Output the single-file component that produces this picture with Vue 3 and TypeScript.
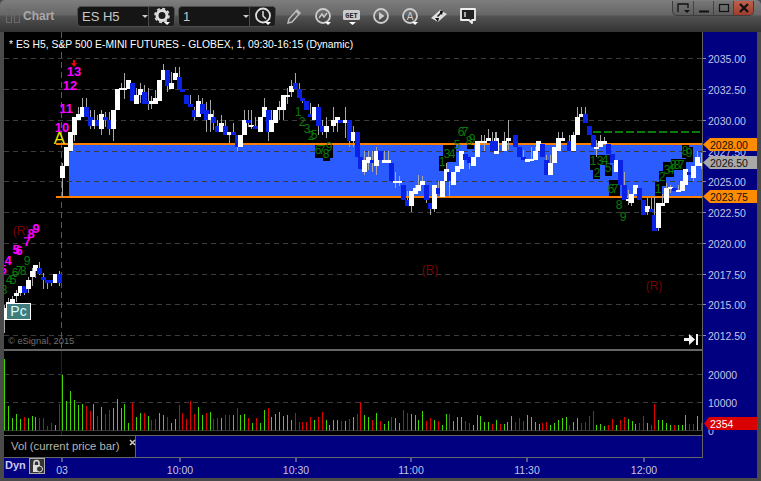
<script setup lang="ts">
type Raw = number[];
interface Body { x: number; y: number; h: number; wx: number; wt: number; wb: number; fill: string }

const seg = (ox: number, oy: number, rows: Raw[]): Body[] =>
  rows.map(([zx, t, b, wt, wb, c]) => {
    const cx = ox + zx / 3;
    const top = oy + t / 3;
    const bot = oy + b / 3;
    return {
      x: Math.round(cx - 2.5), y: Math.round(top), h: Math.max(2, Math.round(bot) - Math.round(top)),
      wx: Math.round(cx - 0.5), wt: Math.round(oy + wt / 3), wb: Math.round(oy + wb / 3),
      fill: c ? '#0a22e6' : '#ffffff',
    };
  });

const candles: Body[] = [
  ...seg(0, 215, [
    [14, 280, 315, 270, 354, 0], [24, 262, 300, 250, 300, 0], [36, 252, 265, 243, 265, 0], [48, 234, 243, 225, 260, 0],
    [60, 213, 234, 213, 243, 0], [72, 213, 234, 213, 240, 1], [85, 195, 222, 185, 234, 0], [97, 168, 186, 160, 213, 0],
    [107, 150, 168, 150, 190, 0], [119, 159, 177, 141, 180, 1], [130, 186, 195, 175, 222, 1], [142, 195, 204, 195, 222, 1],
    [154, 195, 204, 195, 213, 1], [165, 177, 204, 177, 204, 0], [178, 177, 204, 168, 213, 1],
  ]),
  ...seg(0, 60, [
    [187, 318, 354, 308, 410, 0], [199, 262, 318, 262, 318, 0], [211, 216, 272, 216, 272, 0], [223, 171, 225, 171, 243, 0],
    [235, 162, 180, 140, 180, 0], [247, 141, 171, 113, 171, 0], [259, 141, 171, 113, 171, 1], [271, 171, 198, 150, 207, 1],
    [282, 180, 198, 150, 207, 0], [291, 180, 198, 165, 198, 1], [304, 162, 207, 150, 225, 0], [316, 171, 180, 155, 200, 1],
    [327, 180, 207, 155, 225, 1], [340, 150, 207, 150, 243, 0], [352, 87, 150, 87, 150, 0], [364, 84, 90, 68, 90, 0],
    [373, 84, 90, 40, 117, 0], [385, 60, 87, 60, 87, 0], [397, 69, 123, 69, 123, 1], [409, 105, 132, 85, 132, 0],
    [421, 87, 105, 69, 130, 0], [433, 96, 132, 75, 132, 1], [445, 123, 132, 85, 150, 1], [455, 123, 132, 108, 147, 0],
    [466, 114, 132, 90, 132, 0], [478, 60, 123, 60, 123, 0], [490, 30, 60, 12, 60, 0], [502, 30, 78, 30, 96, 1],
    [514, 69, 87, 36, 87, 0], [526, 39, 60, 21, 60, 0], [538, 51, 87, 21, 87, 1], [548, 87, 96, 87, 96, 1],
    [560, 105, 132, 105, 132, 1], [571, 132, 141, 105, 141, 1], [583, 150, 171, 140, 180, 1], [595, 123, 171, 105, 171, 0],
    [607, 132, 162, 115, 162, 1], [619, 150, 180, 125, 216, 1], [630, 162, 180, 120, 216, 0], [640, 171, 189, 150, 210, 1],
    [651, 198, 216, 180, 216, 1], [663, 189, 216, 165, 216, 0], [676, 198, 225, 180, 225, 1], [688, 216, 225, 216, 250, 0],
    [700, 216, 225, 190, 225, 1], [712, 225, 261, 225, 273, 1], [722, 225, 261, 225, 261, 0], [734, 180, 225, 150, 225, 0],
    [745, 180, 189, 150, 200, 1],
  ]),
  ...seg(250, 70, [
    [5, 165, 170, 120, 177, 0], [17, 168, 177, 140, 177, 1], [31, 141, 186, 141, 186, 0], [43, 111, 141, 84, 141, 0],
    [55, 120, 186, 120, 213, 1], [64, 150, 186, 120, 186, 0], [76, 120, 159, 120, 159, 0], [88, 111, 120, 93, 150, 0],
    [100, 75, 120, 75, 150, 0], [112, 75, 80, 55, 102, 0], [124, 48, 66, 30, 80, 0], [136, 39, 57, 9, 57, 1],
    [148, 57, 84, 39, 84, 1], [157, 84, 93, 84, 100, 1], [169, 93, 120, 93, 120, 1], [180, 132, 141, 100, 141, 1],
    [192, 111, 150, 111, 150, 0], [204, 111, 168, 102, 195, 1], [216, 168, 186, 150, 195, 1], [230, 168, 186, 140, 205, 0],
    [250, 150, 168, 111, 186, 0], [262, 141, 159, 141, 186, 0], [272, 150, 159, 150, 159, 1], [285, 150, 159, 111, 204, 0],
    [297, 150, 213, 150, 230, 1], [309, 186, 213, 168, 232, 0], [321, 186, 261, 186, 261, 1], [330, 261, 297, 261, 297, 1],
    [343, 270, 306, 243, 315, 0], [355, 261, 279, 243, 300, 0], [366, 270, 279, 243, 306, 1], [378, 243, 288, 231, 315, 0],
    [390, 243, 270, 243, 270, 1], [402, 270, 279, 243, 279, 0], [414, 270, 279, 243, 279, 0], [424, 279, 333, 279, 333, 1],
    [436, 333, 339, 306, 354, 0], [448, 333, 339, 318, 348, 0], [460, 345, 390, 345, 390, 1], [471, 390, 408, 363, 408, 1],
    [484, 363, 408, 363, 426, 0], [496, 354, 372, 345, 372, 0], [505, 345, 363, 315, 363, 0], [517, 333, 345, 318, 345, 0],
    [529, 345, 390, 345, 399, 1], [540, 399, 417, 399, 435, 1], [553, 345, 417, 345, 426, 0], [564, 354, 372, 333, 372, 1],
    [576, 333, 381, 333, 381, 0], [588, 297, 333, 279, 333, 0], [597, 306, 333, 306, 381, 1], [609, 306, 345, 306, 345, 0],
    [622, 288, 306, 288, 306, 0], [634, 243, 297, 243, 297, 0], [646, 252, 270, 252, 270, 1], [657, 261, 279, 261, 297, 1],
    [669, 261, 288, 261, 288, 0], [681, 213, 261, 213, 261, 0], [693, 213, 219, 195, 219, 0], [703, 213, 219, 195, 243, 0],
    [715, 204, 213, 177, 213, 0], [727, 213, 243, 186, 243, 1], [739, 204, 252, 186, 252, 0],
  ]),
  ...seg(500, 90, [
    [-13, 153, 183, 126, 183, 1], [13, 153, 183, 126, 183, 0], [25, 144, 153, 90, 180, 0], [46, 135, 171, 135, 171, 1],
    [58, 171, 201, 171, 201, 1], [70, 201, 210, 180, 210, 1], [82, 207, 216, 207, 216, 0], [94, 207, 213, 170, 213, 0],
    [105, 183, 210, 170, 210, 0], [115, 153, 183, 153, 183, 0], [127, 162, 201, 162, 201, 1], [139, 210, 255, 195, 255, 1],
    [151, 219, 255, 195, 255, 0], [163, 171, 219, 171, 219, 0], [175, 144, 183, 126, 183, 0], [187, 144, 153, 126, 153, 0],
    [207, 153, 183, 135, 183, 1], [219, 135, 183, 126, 183, 0], [231, 81, 135, 51, 135, 0], [243, 72, 81, 51, 81, 0],
    [256, 72, 99, 51, 99, 1], [268, 108, 135, 108, 135, 1], [280, 135, 171, 135, 171, 1], [290, 171, 177, 150, 200, 0],
    [302, 153, 171, 135, 171, 0], [314, 153, 162, 140, 162, 0], [325, 162, 192, 162, 192, 1], [337, 192, 219, 192, 219, 1],
    [348, 210, 246, 210, 246, 0], [360, 210, 285, 210, 285, 1], [372, 285, 330, 246, 330, 1], [384, 327, 333, 300, 345, 0],
    [394, 312, 339, 312, 348, 0], [406, 285, 312, 285, 312, 0], [418, 294, 330, 294, 330, 1], [430, 330, 375, 330, 375, 1],
    [442, 348, 366, 320, 375, 0], [454, 357, 366, 320, 366, 1], [463, 375, 423, 320, 423, 1], [475, 339, 414, 339, 423, 0],
    [487, 339, 348, 312, 348, 0], [499, 294, 339, 280, 339, 0], [511, 291, 297, 285, 310, 0], [522, 294, 303, 294, 303, 1],
    [534, 300, 306, 285, 306, 0], [546, 273, 303, 273, 303, 0], [556, 237, 285, 237, 285, 0], [567, 246, 255, 246, 255, 1],
    [579, 228, 264, 228, 273, 0], [591, 201, 228, 183, 228, 0], [603, 219, 228, 190, 237, 0],
  ]),
];

const gridY = [58, 89, 120, 151, 181, 212, 243, 274, 304, 335];

const mag = [
  { t: '13', x: 74, y: 76 }, { t: '12', x: 70, y: 90 }, { t: '11', x: 66, y: 113 }, { t: '10', x: 62, y: 132 },
  { t: '9', x: 36, y: 233 }, { t: '8', x: 31, y: 238 }, { t: '7', x: 27, y: 246 }, { t: '6', x: 19, y: 255 },
  { t: '5', x: 16, y: 254 }, { t: '4', x: 8, y: 265 }, { t: '5', x: 3, y: 274 },
];
const grn = [
  { t: '9', x: 27, y: 265 }, { t: '8', x: 23, y: 275 }, { t: '7', x: 19, y: 275 }, { t: '6', x: 15, y: 277 },
  { t: '5', x: 13, y: 284 }, { t: '4', x: 9, y: 284 }, { t: '3', x: 4, y: 294 },
  { t: '1', x: 298, y: 116 }, { t: '2', x: 302, y: 126 }, { t: '3', x: 307, y: 133 }, { t: '2', x: 311, y: 140 }, { t: '5', x: 314, y: 139 },
  { t: '6', x: 318, y: 154 }, { t: '7', x: 322, y: 154 }, { t: '9', x: 329, y: 151 }, { t: '8', x: 326, y: 158 },
  { t: '1', x: 442, y: 166 }, { t: '3', x: 447, y: 158 }, { t: '4', x: 452, y: 158 }, { t: '5', x: 457, y: 149 },
  { t: '6', x: 461, y: 136 }, { t: '7', x: 465, y: 136 }, { t: '8', x: 469, y: 145 }, { t: '9', x: 472, y: 143 },
  { t: '1', x: 593, y: 165 }, { t: '3', x: 600, y: 165 }, { t: '4', x: 605, y: 164 }, { t: '2', x: 597, y: 177 },
  { t: '5', x: 608, y: 172 }, { t: '6', x: 611, y: 193 }, { t: '7', x: 615, y: 193 }, { t: '8', x: 619, y: 209 }, { t: '9', x: 623, y: 221 },
  { t: '1', x: 658, y: 193 }, { t: '2', x: 662, y: 181 }, { t: '3', x: 667, y: 174 }, { t: '4', x: 671, y: 174 },
  { t: '8', x: 673, y: 169 }, { t: '8', x: 677, y: 169 }, { t: '7', x: 681, y: 169 }, { t: '8', x: 685, y: 155 }, { t: '9', x: 689, y: 157 },
];
const boxes = [
  [315, 145, 18, 13], [323, 158, 7, 3],
  [439, 156, 8, 15], [443, 145, 13, 17], [467, 145, 7, 4],
  [590, 155, 10, 15], [593, 170, 7, 9], [600, 155, 10, 10], [605, 165, 7, 11], [609, 180, 11, 16],
  [655, 182, 7, 14], [659, 171, 7, 15], [663, 162, 11, 15], [671, 159, 15, 11], [682, 145, 7, 13], [686, 147, 7, 15],
];
const rs = [{ x: 21, y: 235 }, { x: 430, y: 274 }, { x: 654, y: 290 }];

const vz1: [number, number, number][] = ([
  [12,42,0],[25,183,0],[37,219,0],[49,207,0],[61,222,0],[73,216,1],[85,219,0],[97,213,0],[106,216,0],[118,219,1],[130,219,1],[142,243,1],[154,234,1],[166,240,0],[178,177,1],[187,90,0],[199,168,0],[211,138,0],[223,165,0],[235,180,0],[247,177,0],[259,183,1],[271,198,1],[280,177,0],[292,213,1],[304,186,0],[316,207,1],[328,195,1],[340,189,0],[352,162,0],[364,189,0],[373,177,0],[385,234,0],[397,174,1],[409,216,0],[421,204,0],[433,204,1],[445,213,0],[454,225,1],[466,222,1],[478,204,0],[490,210,0],[502,216,1],[514,234,0],[526,222,0],[538,180,1],[547,204,1],[559,222,1],[571,168,1],[583,207,1],[595,186,0],[607,210,0],[619,204,1],[631,201,0],[640,222,1],[652,219,1],[664,219,0],[676,210,1],[688,210,1],[700,210,0],[712,189,1],[721,210,0],[733,207,0],[745,219,1],[757,234,0],[769,219,1],[781,234,0],[793,195,0],[805,189,1],[814,216,0],[826,207,0],[838,201,0],[850,213,0],[862,210,0],[874,225,0],[886,204,1],[898,231,1],[907,231,1],[919,231,1],[931,216,1],[943,225,0],[955,216,1],[967,201,1],[979,225,0],[988,240,0],[1000,225,0],[1012,225,0],[1024,228,1],[1036,228,0],[1048,222,1],[1060,216,0],[1072,207,1],[1081,171,1],[1093,210,0],[1105,216,0],[1117,225,1],[1129,204,0],
] as [number, number, number][]);
const vz2: [number, number, number][] = ([
  [1,288,1],[14,297,0],[25,288,0],[34,276,1],[46,279,0],[58,294,0],[70,255,1],[82,264,1],[94,267,0],[106,270,0],[115,285,0],[127,258,0],[139,288,1],[151,279,1],[163,285,0],[175,288,1],[187,300,0],[199,267,0],[208,267,1],[220,288,0],[232,276,0],[244,276,0],[256,288,1],[268,294,1],[280,300,0],[292,270,0],[301,273,0],[313,291,0],[325,291,0],[337,297,1],[349,285,0],[361,297,1],[373,297,0],[382,291,0],[394,273,0],[406,291,1],[418,279,1],[430,288,1],[442,270,0],[454,276,0],[466,291,0],[478,297,0],[487,294,1],[499,291,1],[511,300,0],[523,294,0],[535,285,0],[547,279,0],[559,276,0],[568,300,1],[580,291,0],[592,279,0],[604,294,1],[616,291,1],[628,273,1],[640,258,1],[649,300,0],[661,297,0],[673,303,0],[685,300,1],[697,282,1],[709,300,0],[721,285,1],[733,276,1],[745,282,0],[757,288,0],[767,297,0],[778,294,1],[790,273,1],[802,294,0],[814,300,1],[823,237,1],[835,285,0],[847,285,0],[859,294,0],[871,300,0],[883,300,1],[895,300,0],[907,300,0],[916,270,0],[928,297,1],[940,297,1],[952,273,0],[964,294,1],
] as [number, number, number][]);
const vols = [
  ...vz1.map(([z, t, c]) => ({ x: Math.floor(z / 3), y: 345 + t / 3, h: (256 - t) / 3, c })),
  ...vz2.map(([z, t, c]) => ({ x: Math.floor(380 + z / 3), y: 325 + t / 3, h: (316 - t) / 3, c })),
];

const prices = [
  { t: '2035.00', y: 58 }, { t: '2032.50', y: 89 }, { t: '2030.00', y: 120 }, { t: '2027.50', y: 151 },
  { t: '2025.00', y: 181 }, { t: '2022.50', y: 212 }, { t: '2020.00', y: 243 }, { t: '2017.50', y: 274 },
  { t: '2015.00', y: 304 }, { t: '2012.50', y: 335 },
];
const tags = [
  { t: '2028.00', y: 138, fill: '#ff8c00' }, { t: '2026.50', y: 156, fill: '#a9a9a9' }, { t: '2023.75', y: 190, fill: '#ff8c00' },
];
const times = [
  { t: '03', x: 62 }, { t: '10:00', x: 180 }, { t: '10:30', x: 296 }, { t: '11:00', x: 411 }, { t: '11:30', x: 527 }, { t: '12:00', x: 644 },
];
</script>

<template>
  <div class="window">
    <header class="titlebar">
      <div class="grip"><i></i><i></i></div>
      <span class="title">Chart</span>
      <div class="field">
        <span class="value">ES H5</span><span class="caret"></span>
        <button class="fbtn">
          <svg width="20" height="20" viewBox="0 0 20 20">
            <circle cx="10" cy="9.500" r="5" fill="none" stroke="#ddd" stroke-width="3" />
            <circle cx="10" cy="9.500" r="7" fill="none" stroke="#ddd" stroke-width="1.600" stroke-dasharray="3 2.500" />
            <path d="M12 16h6l-3 3z" fill="#fff" />
          </svg>
        </button>
      </div>
      <div class="field">
        <span class="value one">1</span><span class="caret"></span>
        <button class="fbtn">
          <svg width="20" height="20" viewBox="0 0 20 20">
            <circle cx="10" cy="9.500" r="7" fill="none" stroke="#ddd" stroke-width="1.800" />
            <path d="M10 5v5l3 3" fill="none" stroke="#ddd" stroke-width="1.500" />
            <path d="M12 16h6l-3 3z" fill="#fff" />
          </svg>
        </button>
      </div>
      <div class="tools">
        <button class="tool">
          <svg width="20" height="20" viewBox="0 0 20 20"><path d="M4 17l1-4 8-9 3 3-8 9zM12 5l3 3" fill="none" stroke="#bbb" stroke-width="1.500" /></svg>
        </button>
        <button class="tool">
          <svg width="20" height="20" viewBox="0 0 20 20">
            <circle cx="10" cy="10" r="7" fill="none" stroke="#ccc" stroke-width="1.800" />
            <path d="M6 12l3-4 2 3 3-4" fill="none" stroke="#ccc" stroke-width="1.400" />
            <path d="M12 16h6l-3 3z" fill="#fff" />
          </svg>
        </button>
        <button class="tool">
          <svg width="24" height="20" viewBox="0 0 24 20">
            <rect x="3" y="4" width="17" height="10" rx="1.500" fill="#ccc" />
            <text x="11.500" y="12" class="gettext">GET</text>
            <path d="M9 16h7l-3.500 3z" fill="#fff" />
          </svg>
        </button>
        <button class="tool">
          <svg width="20" height="20" viewBox="0 0 20 20">
            <circle cx="10" cy="10" r="7" fill="none" stroke="#ccc" stroke-width="1.800" />
            <path d="M8 6l5.500 4L8 14z" fill="#ccc" />
          </svg>
        </button>
        <button class="tool">
          <svg width="20" height="20" viewBox="0 0 20 20">
            <circle cx="10" cy="10" r="7" fill="none" stroke="#ccc" stroke-width="1.800" />
            <text x="10" y="13.500" class="atext">A</text>
            <path d="M12 16h6l-3 3z" fill="#fff" />
          </svg>
        </button>
        <button class="tool">
          <svg width="20" height="20" viewBox="0 0 20 20">
            <path d="M2 12l9-8 7 4-9 8z" fill="#ddd" />
            <path d="M11 5l3 0-1 4-1-1-3 3-1-1 3-3zM6 12h4l-1 4z" fill="#111" />
          </svg>
        </button>
        <button class="tool">
          <svg width="20" height="20" viewBox="0 0 20 20">
            <path d="M3 3h14v11h-3v3l-3-3H3z" fill="#222" stroke="#eee" stroke-width="1.800" stroke-linejoin="round" />
            <path d="M7 6v5" stroke="#eee" stroke-width="1.300" />
          </svg>
        </button>
      </div>
      <div class="winbtns">
        <button class="wb">
          <svg width="14" height="12" viewBox="0 0 14 12"><path d="M2 10V2h10v4" fill="none" stroke="#111" stroke-width="1.300" /><path d="M8 8h6l-3 3z" fill="#111" /></svg>
        </button>
        <button class="wb">
          <svg width="14" height="12" viewBox="0 0 14 12"><path d="M2 9.500h10" stroke="#111" stroke-width="2" /></svg>
        </button>
        <button class="wb">
          <svg width="14" height="12" viewBox="0 0 14 12"><rect x="2.500" y="2.500" width="9" height="7" fill="none" stroke="#111" stroke-width="1.200" /></svg>
        </button>
        <button class="wb close">
          <svg width="14" height="12" viewBox="0 0 14 12"><path d="M3 2l8 8M11 2l-8 8" stroke="#111" stroke-width="2.400" /></svg>
        </button>
      </div>
    </header>

    <main class="content">
      <div class="upper">
        <div class="plots">
          <svg class="price" width="698" height="317" viewBox="4 32 698 317">
            <rect x="69" y="145" width="633" height="51" fill="#2a5cff" />
            <line v-for="y in gridY" :key="y" x1="4" x2="702" :y1="y + 0.5" :y2="y + 0.5" class="grid" />
            <line x1="61.500" x2="61.500" y1="32" y2="349" class="vgrid" />
            <rect v-for="(b, i) in boxes" :key="'k' + i" :x="b[0]" :y="b[1]" :width="b[2]" :height="b[3]" fill="#000" />
            <rect x="56" y="143" width="646" height="2" fill="#ff8000" />
            <rect x="56" y="196" width="646" height="2" fill="#ff8000" />
            <line x1="593" x2="702" y1="132" y2="132" class="gdash" />
            <g v-for="(c, i) in candles" :key="'c' + i">
              <rect :x="c.wx" :y="c.wt" width="1" :height="c.wb - c.wt" fill="#a8a8a8" />
              <rect :x="c.x" :y="c.y" width="5" :height="c.h" :fill="c.fill" />
            </g>
            <text x="9" y="48" class="symtitle">* ES H5, S&amp;P 500 E-MINI FUTURES - GLOBEX, 1, 09:30-16:15 (Dynamic)</text>
            <text v-for="(n, i) in grn" :key="'g' + i" :x="n.x" :y="n.y" class="grn">{{ n.t }}</text>
            <text v-for="(n, i) in mag" :key="'m' + i" :x="n.x" :y="n.y" class="mag">{{ n.t }}</text>
            <text v-for="(r, i) in rs" :key="'r' + i" :x="r.x" :y="r.y" class="rr">(R)</text>
            <text x="59.500" y="144" class="aa">A</text>
            <path d="M73 60h2v3h2l-3 4-3-4h2z" fill="#f00000" />
            <text x="8" y="344" class="copy">© eSignal, 2015</text>
            <path d="M684 338h5v-4l6 5.500-6 5.500v-4h-5z" fill="#f2f2f2" /><rect x="696" y="334" width="2" height="11" fill="#f2f2f2" />
          </svg>
          <div class="pc">Pc</div>
          <div class="sep"></div>
          <svg class="vol" width="698" height="84" viewBox="4 351 698 84">
            <line x1="4" x2="702" y1="374.500" y2="374.500" class="grid" />
            <line x1="4" x2="702" y1="402.500" y2="402.500" class="grid" />
            <line x1="4" x2="702" y1="430.500" y2="430.500" stroke="#3a3a3a" />
            <line x1="61.500" x2="61.500" y1="351" y2="435" stroke="#222" />
            <rect v-for="(v, i) in vols" :key="i" :x="v.x" :y="v.y" width="1" :height="v.h" :fill="v.c ? '#e00000' : '#3fd800'" />
          </svg>
          <div class="tabs">
            <div class="tab">
              <span>Vol (current price bar)</span>
              <svg class="tabx" width="7" height="7" viewBox="0 0 7 7"><path d="M1 1l5 5M6 1l-5 5" stroke="#ccc" stroke-width="1.500" /></svg>
            </div>
            <div class="tabfill"></div>
          </div>
        </div>
        <aside class="axis">
          <svg width="54" height="426" viewBox="703 32 54 426">
            <g v-for="p in prices" :key="p.t">
              <line x1="703" x2="706" :y1="p.y + 0.5" :y2="p.y + 0.5" stroke="#8888aa" />
              <text x="708" :y="p.y + 4.500" class="plabel">{{ p.t }}</text>
            </g>
            <g v-for="t in tags" :key="t.t">
              <path :d="`M703 ${t.y + 6.500}l7-6.500h47v13h-47z`" :fill="t.fill" />
              <text x="710" :y="t.y + 11" class="tagtext">{{ t.t }}</text>
            </g>
            <text x="708" y="378.500" class="plabel">20000</text>
            <text x="708" y="406.500" class="plabel">10000</text>
            <text x="708" y="435" class="plabel">0</text>
            <path d="M704 423.500l5-6.500h48v13h-48z" fill="#d80000" />
            <text x="710" y="428" class="voltag">2354</text>
          </svg>
        </aside>
      </div>
      <footer class="timeaxis">
        <span class="dyn">Dyn</span>
        <span class="lock">
          <svg width="14" height="14" viewBox="0 0 14 14">
            <path d="M4 7V4a2.500 2.500 0 0 1 5 0v3" fill="none" stroke="#ddd" stroke-width="1.500" />
            <rect x="3" y="6" width="7" height="7" fill="#ddd" />
            <circle cx="9.500" cy="10" r="3" fill="#333" stroke="#ddd" />
          </svg>
        </span>
        <svg class="ticks" width="760" height="20" viewBox="0 0 760 20">
          <g v-for="t in times" :key="t.t">
            <rect :x="t.x - 0.500" y="0" width="1" height="4" fill="#aaa" />
            <text :x="t.x" y="16" class="tlabel">{{ t.t }}</text>
          </g>
        </svg>
      </footer>
    </main>
  </div>
</template>

<style scoped>
.window {
  width: 761px;
  height: 481px;
  box-sizing: border-box;
  display: flex;
  flex-direction: column;
  background: #4a4a4a;
  font-family: "Liberation Sans", Arial, sans-serif;
  overflow: hidden;
  position: relative;
}
.titlebar {
  height: 32px;
  flex: none;
  display: flex;
  align-items: center;
  padding-left: 6px;
  box-sizing: border-box;
  background: linear-gradient(#7e7e7e 0, #666 15px, #525252 16px, #333 32px);
  border-radius: 5px 5px 0 0;
  position: relative;
}
.grip { display: flex; gap: 2px; width: 15px; }
.grip i { width: 4px; height: 12px; border: 1px solid #6a6a6a; display: block; }
.title { margin-left: 2px; width: 54px; font-size: 12px; font-weight: bold; color: #a8a8a8; }
.field {
  width: 98px;
  height: 21px;
  margin-right: 3px;
  box-sizing: border-box;
  display: flex;
  align-items: center;
  background: #151515;
  border: 1px solid #4c4c4c;
  border-radius: 4px;
  position: relative;
}
.value { padding-left: 4px; font-size: 13px; color: #c8c8c8; width: 56px; }
.value.one { width: 56px; }
.caret { width: 0; height: 0; border: 3px solid transparent; border-top-color: #ccc; border-bottom: 0; margin-left: 5px; }
.fbtn {
  margin-left: auto;
  width: 26px;
  height: 19px;
  padding: 0;
  background: #1c1c1c;
  border: 0;
  border-left: 1px solid #4c4c4c;
  border-radius: 0 3px 3px 0;
  display: flex;
  align-items: center;
  justify-content: center;
}
.tools { display: flex; }
.tool {
  width: 29px;
  height: 24px;
  padding: 0;
  background: none;
  border: 0;
  display: flex;
  align-items: center;
  justify-content: center;
}
.gettext { font: bold 7px "Liberation Mono", monospace; fill: #222; text-anchor: middle; }
.atext { font: 10px "Liberation Sans", sans-serif; fill: #ccc; text-anchor: middle; }
.winbtns {
  position: absolute;
  right: 7px;
  top: 1px;
  display: flex;
  height: 14px;
  background: linear-gradient(#777, #5c5c5c);
  border: 1px solid #3c3c3c;
  border-top: 0;
  border-radius: 0 0 5px 5px;
}
.wb {
  width: 20px;
  padding: 0;
  background: none;
  border: 0;
  border-left: 1px solid #444;
  display: flex;
  align-items: center;
  justify-content: center;
}
.wb:first-child { border-left: 0; }
.close { background: linear-gradient(#c0604c, #a03c2c); border-radius: 0 0 4px 0; }
.content {
  width: 753px;
  margin-left: 4px;
  height: 446px;
  flex: none;
  display: flex;
  flex-direction: column;
  background: #000;
}
.upper { display: flex; height: 426px; flex: none; }
.plots { width: 698px; display: flex; flex-direction: column; position: relative; }
.plots svg { display: block; flex: none; }
.price, .vol { background: #000; }
.grid { stroke: #3c3c3c; stroke-dasharray: 5 4; }
.vgrid { stroke: #5a5a5a; stroke-dasharray: 6 4; }
.gdash { stroke: #0a7a0a; stroke-width: 2; stroke-dasharray: 8 3; }
.symtitle { font: 10.350px "Liberation Sans", sans-serif; fill: #fff; }
.grn { font: 12px "Liberation Sans", sans-serif; fill: #0a7a0a; text-anchor: middle; }
.mag { font: bold 13px "Liberation Sans", sans-serif; fill: #ff00ff; text-anchor: middle; }
.rr { font: 12px "Liberation Sans", sans-serif; fill: #7a0000; text-anchor: middle; }
.aa { font: 17px "Liberation Sans", sans-serif; fill: #e8e800; text-anchor: middle; }
.copy { font: 9.300px "Liberation Sans", sans-serif; fill: #707070; }
.pc {
  position: absolute;
  left: 2px;
  top: 271px;
  width: 25px;
  height: 17px;
  box-sizing: border-box;
  background: #3f7c7c;
  border: 1px solid #fff;
  color: #dff;
  font-size: 14px;
  line-height: 15px;
  text-align: center;
}
.sep { height: 2px; flex: none; background: #666; }
.tabs { height: 23px; flex: none; box-sizing: border-box; display: flex; border-top: 1px solid #666; border-bottom: 1px solid #666; }
.tab {
  width: 132px;
  flex: none;
  box-sizing: border-box;
  padding-left: 7px;
  background: #000;
  border-right: 1px solid #666;
  color: #b4b4b4;
  font-size: 11.300px;
  line-height: 21px;
  position: relative;
}
.tabx { position: absolute; left: 125px; top: 3px; }
.tabfill { flex: 1; background: #000080; }
.axis { width: 55px; flex: none; box-sizing: border-box; background: #000080; border-left: 1px solid #666; }
.axis svg { display: block; }
.plabel { font: 10.500px "Liberation Sans", sans-serif; fill: #c4c4e6; }
.tagtext { font: 10.500px "Liberation Sans", sans-serif; fill: #111; }
.voltag { font: 10.500px "Liberation Sans", sans-serif; fill: #fff; }
.timeaxis {
  height: 20px;
  flex: none;
  background: #000080;
  position: relative;
  display: flex;
  align-items: flex-start;
}
.dyn { margin-left: 1px; margin-top: 1px; font-size: 11px; font-weight: bold; color: #c8c8e8; width: 24px; }
.lock {
  width: 16px;
  height: 16px;
  box-sizing: border-box;
  background: #333;
  border: 1px solid #aaa;
  display: flex;
  align-items: center;
  justify-content: center;
}
.ticks { position: absolute; left: -4px; top: 0; }
.tlabel { font: 10.500px "Liberation Sans", sans-serif; fill: #c4c4e6; text-anchor: middle; }
</style>

<style>
html, body { background: #4a4a4a; }
</style>
